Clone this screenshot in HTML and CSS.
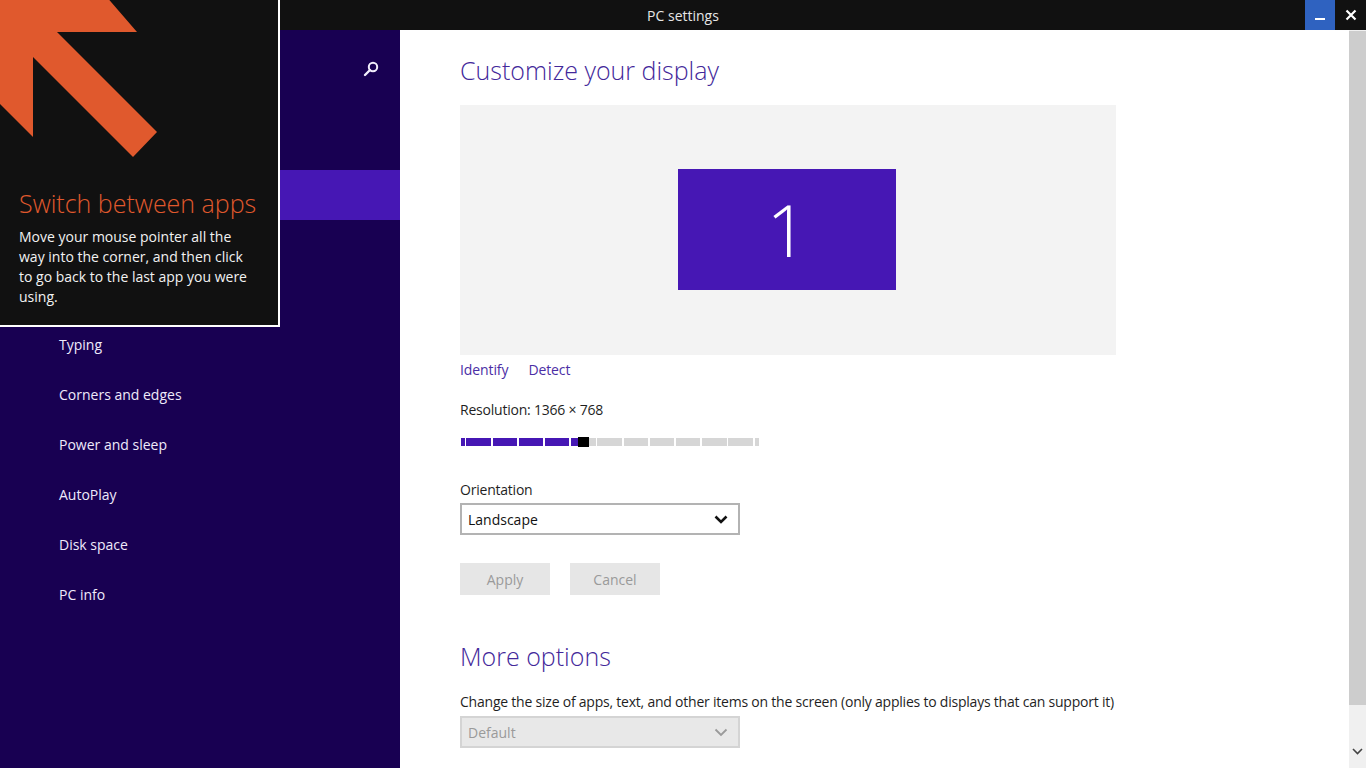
FILE: index.html
```html
<!DOCTYPE html>
<html lang="en">
<head>
<meta charset="utf-8">
<title>PC settings</title>
<link rel="stylesheet" href="styles.css">
</head>
<body>
<div class="window">
  <header class="titlebar">
    <div class="title">PC settings</div>
    <div class="caption-buttons">
      <div class="cap-btn cap-min"><span class="min-dash"></span></div>
      <div class="cap-btn cap-close">
        <svg width="12" height="12" viewBox="0 0 12 12"><path d="M1.5 1.5 L10.5 10.5 M10.5 1.5 L1.5 10.5" stroke="#fff" stroke-width="2.2" fill="none"/></svg>
      </div>
    </div>
  </header>
  <div class="main">
    <aside class="sidebar">
      <div class="side-header">
        <svg class="search-icon" width="16" height="16" viewBox="0 0 16 16"><circle cx="10" cy="6" r="4.2" stroke="#f2eefc" stroke-width="2" fill="none"/><path d="M7 9 L2 14" stroke="#f2eefc" stroke-width="2.4" stroke-linecap="round"/></svg>
      </div>
      <nav class="nav">
        <div class="nav-item" aria-hidden="true"></div>
        <div class="nav-item selected" aria-hidden="true"></div>
        <div class="nav-item" aria-hidden="true"></div>
        <div class="nav-item" aria-hidden="true"></div>
        <div class="nav-item">Typing</div>
        <div class="nav-item">Corners and edges</div>
        <div class="nav-item">Power and sleep</div>
        <div class="nav-item">AutoPlay</div>
        <div class="nav-item">Disk space</div>
        <div class="nav-item">PC info</div>
      </nav>
    </aside>
    <section class="content">
      <h1 class="heading">Customize your display</h1>
      <div class="preview">
        <div class="monitor">1</div>
      </div>
      <div class="links">
        <span class="link">Identify</span>
        <span class="link">Detect</span>
      </div>
      <div class="label res-label">Resolution: 1366 × 768</div>
      <div class="slider">
        <div class="slider-track"></div>
        <div class="slider-thumb"></div>
      </div>
      <div class="label orient-label">Orientation</div>
      <div class="select">
        <span>Landscape</span>
        <svg width="14" height="9" viewBox="0 0 14 9"><path d="M1.5 1.5 L7 7 L12.5 1.5" stroke="#111" stroke-width="2.6" fill="none"/></svg>
      </div>
      <div class="buttons">
        <div class="btn">Apply</div>
        <div class="btn">Cancel</div>
      </div>
      <h2 class="heading heading2">More options</h2>
      <div class="label desc">Change the size of apps, text, and other items on the screen (only applies to displays that can support it)</div>
      <div class="select disabled">
        <span>Default</span>
        <svg width="14" height="9" viewBox="0 0 14 9"><path d="M1.5 1.5 L7 7 L12.5 1.5" stroke="#9a9a9a" stroke-width="1.8" fill="none"/></svg>
      </div>
    </section>
    <div class="scrollbar">
      <div class="scroll-thumb"></div>
      <div class="scroll-arrow">
        <svg width="11" height="7" viewBox="0 0 11 7"><path d="M1 1 L5.5 5.5 L10 1" stroke="#444" stroke-width="1.6" fill="none"/></svg>
      </div>
    </div>
  </div>
  <div class="tip">
    <svg class="tip-arrow" width="170" height="170" viewBox="0 0 170 170"><polygon points="-5,-5 105,-5 137,32 57,32 157,132 133,157 33,57 33,137 -5,99" fill="#e0592d"/></svg>
    <div class="tip-title">Switch between apps</div>
    <div class="tip-text">Move your mouse pointer all the<br>way into the corner, and then click<br>to go back to the last app you were<br>using.</div>
  </div>
</div>
</body>
</html>
```
FILE: styles.css
```css
* { box-sizing: border-box; }
html, body { margin: 0; padding: 0; }
body {
  width: 1366px;
  height: 768px;
  overflow: hidden;
  font-family: "Open Sans", "Noto Sans", "Liberation Sans", sans-serif;
  background: #fff;
}
.window {
  position: relative;
  width: 1366px;
  height: 768px;
  display: flex;
  flex-direction: column;
}
.titlebar {
  position: relative;
  height: 30px;
  background: #111111;
  display: flex;
  justify-content: center;
  align-items: center;
}
.title {
  color: #e6e6e6;
  font-size: 14px;
}
.caption-buttons {
  position: absolute;
  right: 0;
  top: 0;
  display: flex;
  height: 30px;
}
.cap-btn {
  width: 30px;
  height: 30px;
  display: flex;
  align-items: center;
  justify-content: center;
}
.cap-min { background: #2f62c0; width: 30px; margin-right: 1px; }
.min-dash {
  display: block;
  width: 10px;
  height: 2px;
  background: #fff;
  margin-top: 8px;
}
.cap-close { width: 30px; }
.main {
  flex: 1;
  display: flex;
  min-height: 0;
}
.sidebar {
  width: 400px;
  background: #180052;
  color: #efeafb;
}
.side-header {
  height: 90px;
  display: flex;
  align-items: center;
  justify-content: flex-end;
  padding: 0 21px 12px 59px;
}
.search-icon { display: block; }
.nav-item {
  height: 50px;
  line-height: 50px;
  padding-left: 59px;
  font-size: 14px;
}
.nav-item.selected { background: #4617b4; }
.content {
  flex: 1;
  padding: 22px 0 0 60px;
  color: #1f1f1f;
}
.heading {
  margin: 0;
  font-size: 25px;
  font-weight: 300;
  line-height: 36px;
  color: #43289a;
}
.preview {
  margin-top: 17px;
  width: 656px;
  height: 250px;
  background: #f3f3f3;
  display: flex;
  align-items: center;
  justify-content: center;
  padding-right: 2px;
  padding-bottom: 2px;
}
.monitor {
  width: 218px;
  height: 121px;
  background: #4617b4;
  color: #fff;
  font-size: 72px;
  font-weight: 300;
  display: flex;
  align-items: center;
  justify-content: center;
  line-height: 1;
}
.links {
  margin-top: 5px;
  display: flex;
  gap: 20px;
  line-height: 20px;
}
.link { color: #4b2ea5; font-size: 14px; letter-spacing: -0.1px; }
.label {
  font-size: 14px;
  line-height: 20px;
  letter-spacing: -0.22px;
}
.res-label { margin-top: 20px; }
.slider {
  position: relative;
  margin-top: 17px;
  width: 299px;
  height: 10px;
  display: flex;
  align-items: center;
}
.slider-track {
  width: 299px;
  height: 8px;
  margin-left: 1px;
  background:
    repeating-linear-gradient(90deg, transparent 0 3.6px, #fff 3.6px 5.4px, transparent 5.4px 26.2px),
    linear-gradient(90deg, #4617b4 0 117px, #d6d6d6 117px 100%);
}
.slider-thumb {
  position: absolute;
  left: 118px;
  top: 0;
  width: 11px;
  height: 10px;
  background: #000;
}
.orient-label { margin-top: 33px; }
.select {
  margin-top: 3px;
  width: 280px;
  height: 32px;
  border: 2px solid #b3b3b3;
  background: #fff;
  display: flex;
  align-items: center;
  justify-content: space-between;
  padding: 0 10px 0 6px;
  font-size: 14px;
  color: #111;
}
.buttons {
  margin-top: 28px;
  display: flex;
  gap: 20px;
}
.btn {
  width: 90px;
  height: 32px;
  background: #e6e6e6;
  color: #9a9a9a;
  font-size: 14px;
  display: flex;
  align-items: center;
  justify-content: center;
}
.heading2 { margin-top: 43px; }
.desc { margin-top: 18px; }
.select.disabled {
  margin-top: 4px;
  background: #e8e8e8;
  border: 2px solid #d4d4d4;
  color: #9a9a9a;
}
.scrollbar {
  width: 17px;
  background: #f0f0f0;
  display: flex;
  flex-direction: column;
  justify-content: space-between;
  padding-top: 1px;
}
.scroll-thumb {
  height: 674px;
  background: #cdcdcd;
}
.scroll-arrow {
  height: 33px;
  display: flex;
  align-items: center;
  justify-content: center;
}
.tip {
  position: absolute;
  left: 0;
  top: 0;
  width: 280px;
  height: 327px;
  background: #111111;
  border-right: 2px solid #fff;
  border-bottom: 2px solid #fff;
  overflow: hidden;
  padding: 187px 0 0 19px;
}
.tip-arrow {
  position: absolute;
  left: 0;
  top: 0;
}
.tip-title {
  color: #e0592d;
  font-size: 25px;
  font-weight: 300;
  line-height: 32px;
}
.tip-text {
  margin-top: 8px;
  color: #f2f2f2;
  font-size: 14px;
  line-height: 20px;
}
```
